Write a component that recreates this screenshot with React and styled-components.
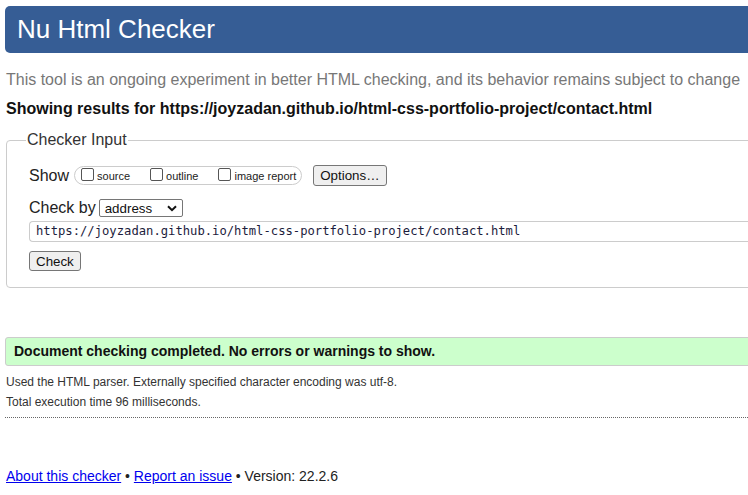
import React from "react";
import styled, { createGlobalStyle } from "styled-components";

const Global = createGlobalStyle`
  html, body { margin: 0; padding: 0; background: #fff; overflow: hidden; }
  body { font-family: "Liberation Sans", Arial, sans-serif; color: #222; }
`;

const Viewport = styled.div`
  width: 748px;
  overflow: hidden;
`;

const Page = styled.div`
  width: 800px;
  padding: 6px 0 0 5px;
  box-sizing: border-box;
`;

const Header = styled.h1`
  margin: 0;
  height: 47px;
  background: #365d95;
  border-radius: 5px;
  color: #fff;
  font-size: 26px;
  font-weight: normal;
  line-height: 47px;
  padding-left: 12px;
`;

const Intro = styled.p`
  margin: 17px 0 0 1px;
  font-size: 16px;
  line-height: 20px;
  color: #777;
`;

const Showing = styled.p`
  margin: 9px 0 0 1px;
  font-size: 16px;
  line-height: 20px;
  font-weight: bold;
  color: #111;
`;

const Fieldset = styled.fieldset`
  margin: 12px 0 0 1px;
  padding: 8px 0 16px 22px;
  border: 1px solid #ccc;
  border-radius: 4px;
`;

const Legend = styled.legend`
  padding: 0 1px;
  margin-left: -3px;
  font-size: 16px;
  color: #333;
`;

const Row = styled.div`
  display: flex;
  align-items: center;
  margin-top: ${(p) => p.$mt || 0}px;
`;

const Label = styled.span`
  font-size: 16px;
  color: #222;
  margin-right: ${(p) => p.$mr || 0}px;
`;

const Pill = styled.div`
  display: flex;
  align-items: center;
  gap: 20px;
  height: 17px;
  padding: 0 5px 0 6px;
  border: 1px solid #ccc;
  border-radius: 10px;
  margin-right: 11px;
`;

const Opt = styled.label`
  display: flex;
  align-items: center;
  font-size: 11px;
  color: #222;
`;

const Box = styled.span`
  display: inline-block;
  width: 11px;
  height: 11px;
  border: 1px solid #555;
  border-radius: 2px;
  margin: 0 3px 3px 0;
  background: #fff;
`;

const Button = styled.button`
  font-family: "Liberation Sans", Arial, sans-serif;
  font-size: ${(p) => p.$fs || 13.33}px;
  height: ${(p) => p.$h || 21}px;
  padding: 0 ${(p) => p.$px || 8}px;
  border: 1px solid #767676;
  border-radius: 3px;
  background: #efefef;
  color: #111;
`;

const Select = styled.div`
  display: flex;
  align-items: center;
  justify-content: space-between;
  width: 84px;
  height: 18px;
  box-sizing: border-box;
  border: 1px solid #767676;
  border-radius: 2px;
  padding: 0 5px 0 5px;
  font-size: 13.33px;
  color: #111;
`;

const UrlInput = styled.div`
  margin-top: 4px;
  height: 21px;
  box-sizing: border-box;
  border: 1px solid #ccc;
  border-right: none;
  border-radius: 4px 0 0 4px;
  padding-left: 6px;
  font-family: "DejaVu Sans Mono", "Liberation Mono", monospace;
  font-size: 12.2px;
  line-height: 19px;
  color: #1c1c3c;
  white-space: nowrap;
`;

const Success = styled.div`
  margin-top: 49px;
  height: 29px;
  box-sizing: border-box;
  background: #ccffcc;
  border: 1px solid #ccc;
  border-radius: 3px;
  padding-left: 8px;
  font-size: 14px;
  font-weight: bold;
  line-height: 27px;
  color: #111;
`;

const Note = styled.p`
  margin: ${(p) => p.$mt || 0}px 0 0 1px;
  font-size: 12px;
  line-height: 20px;
  color: #333;
`;

const Rule = styled.hr`
  margin: 5px 0 0 0;
  width: 743px;
  border: none;
  border-top: 1px dotted #666;
`;

const Footer = styled.p`
  margin: 49px 0 0 1px;
  font-size: 14px;
  line-height: 18px;
  color: #222;
`;

const Link = styled.a`
  color: #0000ee;
  text-decoration: underline;
`;

const Chevron = () => (
  <svg width="10" height="7" viewBox="0 0 10 7">
    <path d="M1 1.2 L5 5.2 L9 1.2" fill="none" stroke="#111" strokeWidth="2" />
  </svg>
);

export default function App() {
  return (
    <Viewport>
      <Global />
      <Page>
        <Header>Nu Html Checker</Header>
        <Intro>
          This tool is an ongoing experiment in better HTML checking, and its behavior remains subject to change
        </Intro>
        <Showing>
          Showing results for https://joyzadan.github.io/html-css-portfolio-project/contact.html
        </Showing>
        <Fieldset>
          <Legend>Checker Input</Legend>
          <Row $mt={8}>
            <Label $mr={5}>Show</Label>
            <Pill>
              <Opt><Box />source</Opt>
              <Opt><Box />outline</Opt>
              <Opt><Box />image report</Opt>
            </Pill>
            <Button $fs={13.33} $px={6}>Options…</Button>
          </Row>
          <Row $mt={13}>
            <Label $mr={3}>Check by</Label>
            <Select>
              address
              <Chevron />
            </Select>
          </Row>
          <UrlInput>https://joyzadan.github.io/html-css-portfolio-project/contact.html</UrlInput>
          <Row $mt={9}>
            <Button $h={20} $px={6}>Check</Button>
          </Row>
        </Fieldset>
        <Success>Document checking completed. No errors or warnings to show.</Success>
        <Note $mt={6}>Used the HTML parser. Externally specified character encoding was utf-8.</Note>
        <Note>Total execution time 96 milliseconds.</Note>
        <Rule />
        <Footer>
          <Link href="#">About this checker</Link> • <Link href="#">Report an issue</Link> • Version: 22.2.6
        </Footer>
      </Page>
    </Viewport>
  );
}
